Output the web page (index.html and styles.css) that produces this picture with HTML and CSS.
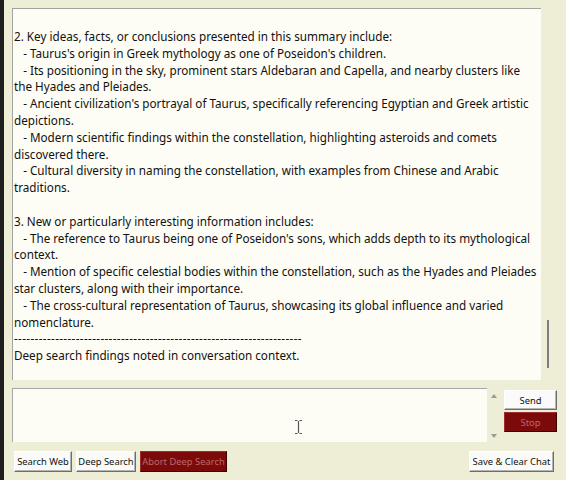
FILE: index.html
```html
<!DOCTYPE html>
<html lang="en">
<head>
<meta charset="utf-8">
<title>Chat</title>
<link rel="stylesheet" href="styles.css">
</head>
<body>
<div class="app">
  <div class="log-row">
    <div class="log">
<div class="log-text">2. Key ideas, facts, or conclusions presented in this summary include:
   - Taurus's origin in Greek mythology as one of Poseidon's children.
   - Its positioning in the sky, prominent stars Aldebaran and Capella, and nearby clusters like the Hyades and Pleiades.
   - Ancient civilization's portrayal of Taurus, specifically referencing Egyptian and Greek artistic depictions.
   - Modern scientific findings within the constellation, highlighting asteroids and comets discovered there.
   - Cultural diversity in naming the constellation, with examples from Chinese and Arabic traditions.

3. New or particularly interesting information includes:
   - The reference to Taurus being one of Poseidon's sons, which adds depth to its mythological context.
   - Mention of specific celestial bodies within the constellation, such as the Hyades and Pleiades star clusters, along with their importance.
   - The cross-cultural representation of Taurus, showcasing its global influence and varied nomenclature.
<span class="rule">----------------------------------------------------------------------</span>
Deep search findings noted in conversation context.</div>
    </div>
    <div class="scrollbar"><div class="thumb"></div></div>
  </div>
  <div class="input-row">
    <div class="input">
      <svg class="ibeam" width="9" height="16" viewBox="0 0 9 16"><path d="M1 1.5h2.5M5.5 1.5H8M4.5 2v12M1 14.5h2.5M5.5 14.5H8" stroke="#555" stroke-width="1.2" fill="none"/></svg>
    </div>
    <div class="spin">
      <span class="tri up"></span>
      <span class="tri down"></span>
    </div>
    <div class="side">
      <button class="btn">Send</button>
      <button class="btn danger">Stop</button>
    </div>
  </div>
  <div class="bottom-row">
    <div class="left-btns">
      <button class="btn w-web">Search Web</button>
      <button class="btn w-deep">Deep Search</button>
      <button class="btn danger w-abort">Abort Deep Search</button>
    </div>
    <button class="btn w-save">Save &amp; Clear Chat</button>
  </div>
</div>
</body>
</html>
```
FILE: styles.css
```css
html, body {
  margin: 0;
  padding: 0;
  background: #eeedd6;
}
.app {
  box-sizing: border-box;
  width: 566px;
  height: 480px;
  border-left: 4px solid #1e1e1e;
  padding: 8px 0 0 8px;
  display: flex;
  flex-direction: column;
  font-family: "Noto Sans", "Open Sans", sans-serif;
  color: #111;
}
.log-row {
  display: flex;
  height: 372px;
}
.log {
  box-sizing: border-box;
  width: 529px;
  height: 372px;
  background: #fdfdf6;
  border-top: 1px solid #a3a3a3;
  border-left: 1px solid #a3a3a3;
  overflow: hidden;
  padding-right: 2px;
}
.log-text {
  white-space: pre-wrap;
  font-size: 11.7px;
  line-height: 16.8px;
  padding: 19px 0 0 1px;
}
.rule {
  letter-spacing: 0.35px;
}
.scrollbar {
  width: 14px;
}
.thumb {
  margin: 312px 0 0 6px;
  width: 2px;
  height: 48px;
  background: #7d7d7d;
}
.input-row {
  display: flex;
  margin-top: 8px;
  height: 54px;
}
.input {
  box-sizing: border-box;
  width: 475px;
  height: 54px;
  background: #fdfdf6;
  border-top: 1px solid #a8a8a8;
  border-left: 1px solid #a8a8a8;
  position: relative;
}
.ibeam {
  position: absolute;
  left: 281px;
  top: 30px;
}
.spin {
  width: 14px;
  display: flex;
  flex-direction: column;
  justify-content: space-between;
  align-items: center;
  padding: 6px 0 4px;
  box-sizing: border-box;
}
.tri {
  width: 0;
  height: 0;
  border-left: 3px solid transparent;
  border-right: 3px solid transparent;
}
.tri.up { border-bottom: 4px solid #9a9a9a; }
.tri.down { border-top: 4px solid #9a9a9a; }
.side {
  display: flex;
  flex-direction: column;
  gap: 2px;
  margin-left: 3px;
  padding-top: 2px;
}
.side .btn {
  width: 53px;
  height: 20px;
}
.btn {
  box-sizing: border-box;
  height: 21px;
  padding: 0;
  font-family: "Noto Sans", "Open Sans", sans-serif;
  font-size: 9.4px;
  color: #111;
  background: #fafaf8;
  border: 1px solid;
  border-color: #fff #6e6e6e #6e6e6e #fff;
  box-shadow: inset -1px -1px 0 #b4b4b4;
  border-radius: 0;
  cursor: default;
}
.btn.danger {
  background: #7d0a0a;
  color: #b86a6a;
  border-color: #9a3030 #3a0000 #3a0000 #9a3030;
  box-shadow: none;
}
.w-web { width: 58px; }
.w-deep { width: 60px; }
.w-abort { width: 87px; }
.w-save { width: 85px; }
.bottom-row {
  display: flex;
  justify-content: space-between;
  align-items: center;
  margin-top: 9px;
  padding: 0 12px 0 2px;
}
.left-btns {
  display: flex;
  gap: 4px;
}
```
